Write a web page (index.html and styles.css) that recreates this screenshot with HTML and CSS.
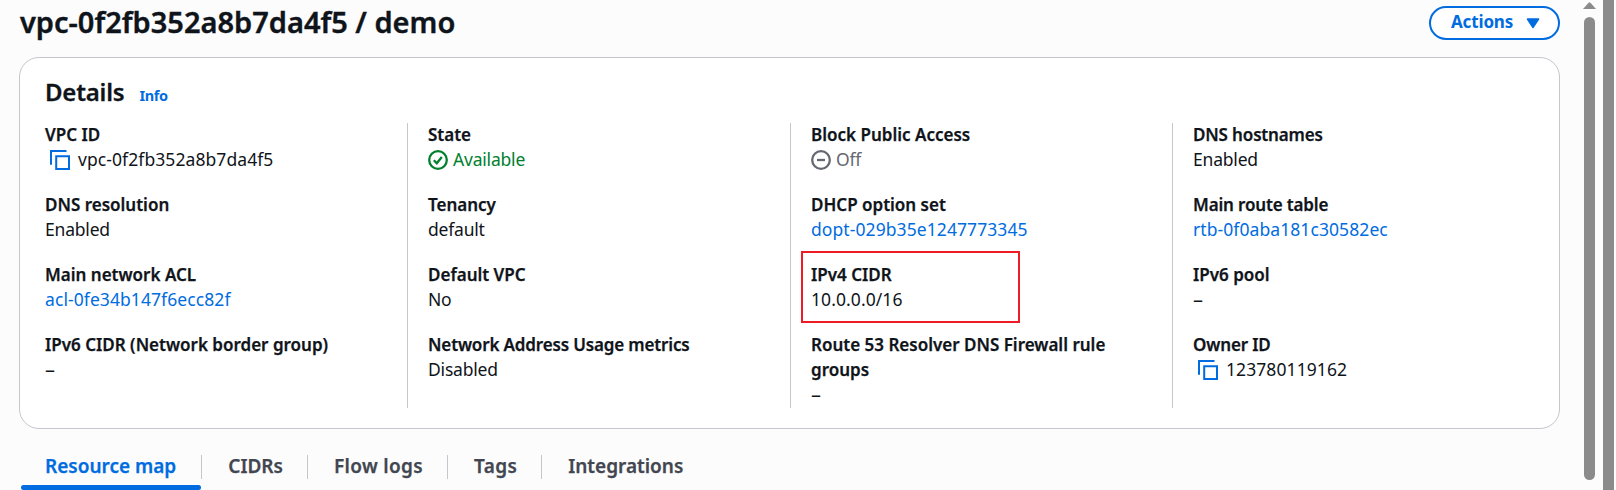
FILE: index.html
```html
<!DOCTYPE html>
<html lang="en">
<head>
<meta charset="utf-8">
<title>VPC details</title>
<link rel="stylesheet" href="styles.css">
</head>
<body>
<div class="app">
  <main class="page">
    <header class="page-header">
      <h1 class="page-title">vpc-0f2fb352a8b7da4f5 / demo</h1>
      <button class="actions" type="button"><span>Actions</span>
        <svg class="caret" viewBox="0 0 14 11"><path d="M1.4 1h11.2L7 9.6z"/></svg>
      </button>
    </header>
    <section class="card">
      <div class="card-header"><h2>Details</h2><a class="info">Info</a></div>
      <div class="columns">
        <dl class="column">
          <div class="field"><dt>VPC ID</dt><dd class="copyable id"><svg class="copy" viewBox="0 0 20 20"><path d="M1 14.7V1h15.5M6.2 6.2H19V19H6.2z"/></svg>vpc-0f2fb352a8b7da4f5</dd></div>
          <div class="field"><dt>DNS resolution</dt><dd>Enabled</dd></div>
          <div class="field"><dt>Main network ACL</dt><dd class="id"><a>acl-0fe34b147f6ecc82f</a></dd></div>
          <div class="field"><dt>IPv6 CIDR (Network border group)</dt><dd class="empty">–</dd></div>
        </dl>
        <dl class="column">
          <div class="field"><dt>State</dt><dd class="status ok"><svg class="status-icon" viewBox="0 0 20 20"><circle cx="10" cy="10" r="8.8"/><path d="M5.8 10.2l3 3 5-6.2"/></svg>Available</dd></div>
          <div class="field"><dt>Tenancy</dt><dd>default</dd></div>
          <div class="field"><dt>Default VPC</dt><dd>No</dd></div>
          <div class="field"><dt class="tight">Network Address Usage metrics</dt><dd>Disabled</dd></div>
        </dl>
        <dl class="column">
          <div class="field"><dt>Block Public Access</dt><dd class="status off"><svg class="status-icon" viewBox="0 0 20 20"><circle cx="10" cy="10" r="8.8"/><path d="M6 10h8"/></svg>Off</dd></div>
          <div class="field"><dt>DHCP option set</dt><dd class="id"><a>dopt-029b35e1247773345</a></dd></div>
          <div class="field marked"><dt>IPv4 CIDR</dt><dd class="id">10.0.0.0/16</dd></div>
          <div class="field"><dt>Route 53 Resolver DNS Firewall rule<br>groups</dt><dd class="empty">–</dd></div>
        </dl>
        <dl class="column">
          <div class="field"><dt class="tight">DNS hostnames</dt><dd>Enabled</dd></div>
          <div class="field"><dt class="tight">Main route table</dt><dd class="id"><a>rtb-0f0aba181c30582ec</a></dd></div>
          <div class="field"><dt>IPv6 pool</dt><dd class="empty">–</dd></div>
          <div class="field"><dt class="tight">Owner ID</dt><dd class="copyable id"><svg class="copy" viewBox="0 0 20 20"><path d="M1 14.7V1h15.5M6.2 6.2H19V19H6.2z"/></svg>123780119162</dd></div>
        </dl>
      </div>
    </section>
    <nav class="tabs">
      <a class="tab active">Resource map</a>
      <a class="tab">CIDRs</a>
      <a class="tab wide">Flow logs</a>
      <a class="tab wide">Tags</a>
      <a class="tab">Integrations</a>
    </nav>
  </main>
  <div class="scrollbar">
    <svg class="scroll-up" viewBox="0 0 13 7"><path d="M0 7L5.8.4h1.4L13 7z"/></svg>
    <div class="thumb"></div>
  </div>
  <div class="edge"></div>
</div>
</body>
</html>
```
FILE: styles.css
```css
* { box-sizing: border-box; }
body { margin: 0; background: #fcfcfd; color: #0f141a; font: 17.5px/25px "Noto Sans", sans-serif; overflow: hidden; }
h1, h2, dl, dt, dd { margin: 0; }
.app { display: flex; height: 490px; overflow: hidden; }

.page { width: 1560px; flex: none; padding-left: 19px; }
.page-header { display: flex; justify-content: space-between; height: 57px; }
.page-title { padding-left: 1px; font-size: 29px; line-height: 44px; font-weight: 600; -webkit-text-stroke: 0.4px; }
.actions { display: flex; align-items: center; gap: 13px; width: 131px; height: 34px; margin-top: 6px; padding: 0 0 3px 20px; border: 2px solid #006ce0; border-radius: 17px; background: #fff; color: #006ce0; font: 700 17px/25px "Noto Sans", sans-serif; letter-spacing: -0.15px; }
.caret { flex: none; width: 14px; height: 11px; margin-top: 3px; fill: #006ce0; stroke: #006ce0; stroke-width: 1.4; stroke-linejoin: round; }

.card { height: 372px; padding: 19px 0 0 25px; background: #fff; border: 1px solid #c6c6cd; border-radius: 20px; }
.card-header { display: flex; align-items: baseline; gap: 15px; height: 46px; }
h2 { font-size: 24px; line-height: 30px; font-weight: 600; letter-spacing: -0.2px; -webkit-text-stroke: 0.3px; }
.info { font-size: 14.5px; font-weight: 700; letter-spacing: -0.4px; }
a, .info { color: #006ce0; }

.columns { display: grid; grid-template-columns: 362px 383px 382px 382px; }
.column { height: 285px; display: flex; flex-direction: column; gap: 20px; }
.column > :first-child { margin-top: -1px; }
.column + .column { border-left: 1px solid #c6c6cd; padding-left: 20px; }
.field { position: relative; }
.marked::after { content: ""; position: absolute; left: -10px; top: -11px; width: 215px; height: 68px; border: 2px solid #ed1c24; }
dt { font-size: 17px; font-weight: 600; -webkit-text-stroke: 0.25px; }
.tight { letter-spacing: -0.15px; }
dd { letter-spacing: -0.2px; }
.id { letter-spacing: 0.08px; }
.empty { font-size: 20px; }
.copyable, .status { display: flex; align-items: center; }
.copy { width: 20px; height: 20px; margin: 0 8px 0 5px; fill: none; stroke: #006ce0; stroke-width: 2; }
.status-icon { width: 20px; height: 20px; margin-right: 5px; fill: none; stroke: currentColor; stroke-width: 2.3; }
.ok { color: #00802f; }
.off { color: #656871; }

.tabs { display: flex; height: 61px; padding-left: 2px; }
.tab { position: relative; padding: 25px 25px 0 26px; font-size: 19px; font-weight: 600; color: #424650; -webkit-text-stroke: 0.25px; }
.tab + .tab::before { content: ""; position: absolute; left: -1px; top: 26px; width: 1px; height: 24px; background: #c6c6cd; }
.active { padding-left: 24px; padding-right: 26px; color: #006ce0; }
.active::after { content: ""; position: absolute; left: 0; top: 56px; width: 180px; height: 5px; border-radius: 3px; background: #006ce0; }
.wide { letter-spacing: 0.35px; }

.scrollbar { display: flex; flex-direction: column; align-items: center; width: 13px; margin: 2px 7px 0 23px; }
.scroll-up { width: 13px; height: 7px; fill: #8b8b8b; }
.thumb { width: 11px; height: 463px; margin-top: 8px; border-radius: 6px; background: #8b8b8b; }
.edge { width: 11px; height: 490px; background: #8b8b8b; }
```
